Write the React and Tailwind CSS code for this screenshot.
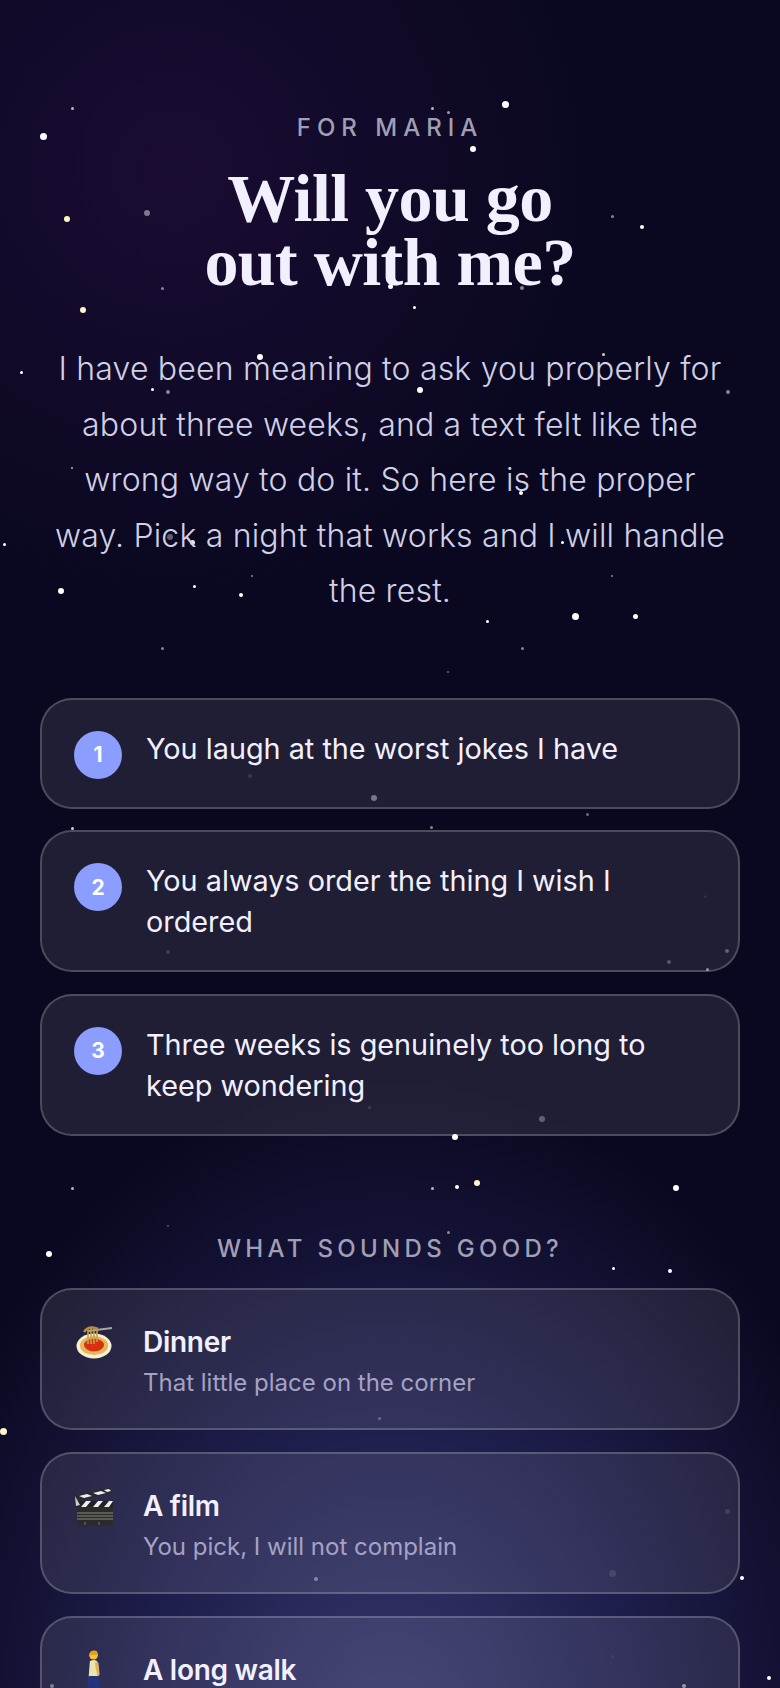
import React from 'react';

// x, y, diameter, opacity, tint
const stars = [
	[72, 108, 3, 0.7], [432, 108, 3, 0.7], [448, 112, 3, 0.6], [505, 104, 7, 1], [43, 136, 7, 1],
	[473, 149, 6, 1], [147, 213, 6, 0.45], [67, 219, 6, 1, '#fff6c8'], [612, 216, 3, 0.5], [642, 227, 4, 1],
	[162, 288, 3, 0.5], [390, 286, 5, 1], [522, 288, 4, 0.5], [414, 307, 3, 1], [83, 310, 6, 1, '#fff6c8'],
	[260, 357, 6, 1], [603, 354, 3, 0.8], [21, 372, 3, 1], [152, 389, 3, 1], [168, 392, 4, 0.5],
	[420, 390, 6, 1], [728, 392, 4, 0.5], [671, 429, 4, 1], [72, 468, 2, 0.7], [521, 493, 4, 1],
	[170, 537, 6, 0.35], [192, 542, 5, 0.9], [562, 542, 3, 1], [4, 544, 3, 1], [252, 576, 2, 0.5],
	[612, 576, 2, 0.5], [61, 591, 6, 1], [194, 586, 3, 1], [241, 595, 4, 1], [487, 621, 3, 1],
	[575, 616, 7, 1], [635, 616, 5, 1], [162, 648, 3, 0.5], [522, 648, 3, 0.5], [448, 672, 2, 0.4],
	[250, 776, 4, 0.12], [374, 798, 6, 0.4], [72, 828, 3, 0.8], [431, 827, 3, 0.5], [587, 814, 3, 0.4],
	[705, 896, 3, 0.08], [669, 962, 4, 0.25], [707, 969, 3, 0.5], [727, 951, 4, 0.3], [168, 952, 4, 0.15],
	[369, 1107, 3, 0.15], [542, 1119, 6, 0.3], [455, 1137, 6, 1], [72, 1188, 3, 0.7], [432, 1188, 3, 0.7],
	[457, 1187, 4, 1], [477, 1183, 6, 1, '#fff6c8'], [676, 1188, 6, 1], [168, 1226, 2, 0.3], [448, 1232, 3, 0.5],
	[49, 1254, 6, 1], [613, 1268, 3, 1], [670, 1271, 4, 1], [379, 1418, 3, 0.3], [727, 1511, 5, 0.12],
	[612, 1573, 7, 0.1], [316, 1579, 4, 0.4], [742, 1578, 4, 1], [3, 1431, 7, 1, '#fff6c8'], [612, 1656, 3, 0.08],
	[684, 1686, 4, 0.5], [769, 1678, 4, 1], [52, 1686, 4, 0.4],
];

const reasons = [
	{n: 1, text: 'You laugh at the worst jokes I have'},
	{n: 2, text: 'You always order the thing I wish I ordered'},
	{n: 3, text: 'Three weeks is genuinely too long to keep wondering'},
];

function Spaghetti() {
	return (
		<svg viewBox="1 4 44 44" className="w-[44px] h-[44px] shrink-0">
			<ellipse cx="21" cy="29" rx="17.5" ry="12.5" fill="#f6efd6" />
			<ellipse cx="21" cy="28.5" rx="14" ry="9.5" fill="#e3b75c" />
			<ellipse cx="21" cy="28" rx="10" ry="6.5" fill="#d9300f" />
			<path d="M15 14 L39 11" stroke="#a9a6a6" strokeWidth="2" />
			<path d="M15 13 v14 M18 11 v16 M21 12 v15 M24 13 v12" stroke="#c9a04e" strokeWidth="1.6" fill="none" />
			<path d="M11 15 q5 -7 14 -3" stroke="#b8913f" strokeWidth="2.5" fill="none" />
		</svg>
	);
}

function Clapper() {
	return (
		<svg viewBox="3 0 44 44" className="w-[44px] h-[44px] shrink-0">
			<rect x="6" y="22" width="36" height="19" rx="1" fill="#2b2b2b" />
			<path d="M6 28 H42 M6 31 H42 M6 34 H42" stroke="#8a8a80" strokeWidth="1" />
			<path d="M14 37 v3 M28 37 v3" stroke="#777" strokeWidth="1" />
			<path d="M5 16 H42 V22 H5 Z" fill="#222" />
			<path d="M10 22 l5 -6 h5 l-5 6 Z M22 22 l5 -6 h5 l-5 6 Z M33 22 l5 -6 h4 l-4 6 Z" fill="#eee" />
			<path d="M4 11 L39 3 L41 8 L6 16 Z" fill="#2a2a2a" />
			<path d="M8 11 l8 -2 l5 2 l-8 2 Z M22 8 l8 -2 l5 2 l-8 2 Z M33 5 l5 -1 l2 2 l-4 1 Z" fill="#eee" />
			<path d="M4 11 L9 20 L5 21 Z" fill="#cfcfcf" />
		</svg>
	);
}

function Walker() {
	return (
		<svg viewBox="4 0 36 36" className="w-[44px] h-[44px] shrink-0">
			<circle cx="20" cy="5" r="3.6" fill="#f7c23a" />
			<path d="M17 3 q3 -3 6 -1 l0 3 l-6 0 Z" fill="#eb9f18" />
			<path d="M17 10 q3 -2 6 0 l1 13 h-8 Z" fill="#ece4ad" />
			<path d="M21 11 l2 11 l2 -1 l-1 -10 Z" fill="#e0b266" />
			<path d="M16 22 h8 l1 8 l6 7 l-2 2 l-8 -7 l-2 -3 l-2 9 h-3 Z" fill="#24347c" />
		</svg>
	);
}

const options = [
	{title: 'Dinner', sub: 'That little place on the corner', icon: Spaghetti},
	{title: 'A film', sub: 'You pick, I will not complain', icon: Clapper},
	{title: 'A long walk', sub: '', icon: Walker},
];

export default function App() {
	return (
		<div
			className="relative h-[1688px] overflow-hidden bg-[#0a0820] font-['Inter',sans-serif] bg-[radial-gradient(ellipse_500px_680px_at_50%_104%,#38386f_0%,#1e1e4c_50%,rgba(10,8,32,0)_100%),radial-gradient(ellipse_420px_420px_at_22%_10%,#1a0c33_0%,rgba(10,8,32,0)_100%)]"
		>
			<div className="absolute inset-0">
				{stars.map(([x, y, d, o, tint], i) => (
					<span
						key={i}
						className="absolute rounded-full bg-white"
						style={{left: x - d / 2, top: y - d / 2, width: d, height: d, opacity: o, background: tint}}
					/>
				))}
			</div>

			<div className="relative px-10 pt-[113px]">
				<p className="text-center text-[24px] leading-[30px] font-medium tracking-[0.25em] text-[#a09fb5]">FOR MARIA</p>
				<h1 className="mt-[23px] text-center font-['Liberation_Serif',serif] text-[68px] leading-[64px] font-bold tracking-[-0.008em] text-[#f2f0ff]">
					Will you go
					<br />
					out with me?
				</h1>
				<p className="mx-auto mt-[47px] max-w-[676px] text-center text-[32px] leading-[55.6px] font-light tracking-[0.18px] text-[#d0d0e6]">
					I have been meaning to ask you properly for about three weeks, and a text felt like the wrong way to do it. So here is the proper way. Pick a night that works and I will handle the rest.
				</p>

				<div className="mt-[79px] flex flex-col gap-[21.5px]">
					{reasons.map((r) => (
						<div key={r.n} className="flex gap-6 rounded-[32px] border-2 border-white/20 bg-white/[0.09] px-8 py-7">
							<span className="mt-[3px] flex h-12 w-12 shrink-0 items-center justify-center rounded-full bg-[#8b9dff] text-[21px] font-bold text-white">
								{r.n}
							</span>
							<p className="text-[28.8px] leading-[41px] text-[#f2f0ff]">{r.text}</p>
						</div>
					))}
				</div>

				<p className="mt-[98px] text-center text-[24px] leading-[30px] font-medium tracking-[0.18em] text-[#a09fb5]">WHAT SOUNDS GOOD?</p>

				<div className="mt-[24px] flex flex-col gap-[22px]">
					{options.map((o) => (
						<div key={o.title} className="flex h-[142px] shrink-0 gap-[25px] rounded-[32px] border-2 border-white/20 bg-white/[0.09] px-8 py-[31px]">
							<o.icon />
							<div>
								<p className="text-[28px] leading-[42px] font-semibold tracking-[-0.01em] text-[#f2f0ff]">{o.title}</p>
								<p className="mt-[2px] text-[24px] leading-[36px] text-[#a5a3c4]">{o.sub}</p>
							</div>
						</div>
					))}
				</div>
			</div>
		</div>
	);
}
